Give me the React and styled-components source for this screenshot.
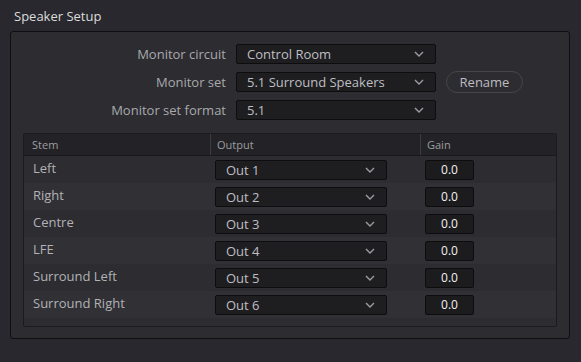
import React from "react";
import styled, { createGlobalStyle } from "styled-components";

const GlobalStyle = createGlobalStyle`
	body {
		margin: 0;
		background: #28282e;
		font-family: "Open Sans", "Noto Sans", sans-serif;
	}
`;

const stems = [
	{ name: "Left", out: "Out 1" },
	{ name: "Right", out: "Out 2" },
	{ name: "Centre", out: "Out 3" },
	{ name: "LFE", out: "Out 4" },
	{ name: "Surround Left", out: "Out 5" },
	{ name: "Surround Right", out: "Out 6" },
];

function Chevron() {
	return (
		<svg width="10" height="6" viewBox="0 0 10 6">
			<path d="M1 1 L5 5 L9 1" fill="none" stroke="#9c9ca0" strokeWidth="1.4" />
		</svg>
	);
}

function Dropdown({ value, width }) {
	return (
		<Select $width={width}>
			<span>{value}</span>
			<Chevron />
		</Select>
	);
}

export default function App() {
	return (
		<Page>
			<GlobalStyle />
			<Title>Speaker Setup</Title>
			<Panel>
				<Form>
					<Label>Monitor circuit</Label>
					<Dropdown value="Control Room" width={200} />
					<span />
					<Label>Monitor set</Label>
					<Dropdown value="5.1 Surround Speakers" width={200} />
					<Button>Rename</Button>
					<Label>Monitor set format</Label>
					<Dropdown value="5.1" width={200} />
					<span />
				</Form>

				<Table>
					<HeaderRow>
						<HeadCell>Stem</HeadCell>
						<HeadCell $divider>Output</HeadCell>
						<HeadCell $divider>Gain</HeadCell>
					</HeaderRow>
					{stems.map((s, i) => (
						<Row key={s.name} $alt={i % 2 === 1}>
							<StemName>{s.name}</StemName>
							<Cell>
								<Dropdown value={s.out} width={172} />
							</Cell>
							<Cell>
								<Gain>0.0</Gain>
							</Cell>
						</Row>
					))}
				</Table>
			</Panel>
		</Page>
	);
}

const Page = styled.div`
	padding: 6px 11px 0 10px;
	width: 560px;
`;

const Title = styled.div`
	padding-left: 4px;
	height: 20px;
	line-height: 20px;
	margin-bottom: 5px;
	font-size: 13px;
	color: #dcdcdc;
`;

const Panel = styled.div`
	border: 1px solid #0f0f11;
	border-radius: 3px;
	background: #2c2c31;
	padding: 12px 12px 11px 12px;
`;

const Form = styled.div`
	display: grid;
	grid-template-columns: 213px 200px auto;
	grid-auto-rows: 20px;
	row-gap: 8px;
	align-items: center;
	margin-bottom: 13px;
`;

const Label = styled.div`
	text-align: right;
	padding-right: 10px;
	font-size: 13px;
	color: #a9a9ac;
	line-height: 20px;
`;

const Select = styled.div`
	box-sizing: border-box;
	width: ${(p) => p.$width}px;
	height: 20px;
	display: flex;
	align-items: center;
	justify-content: space-between;
	padding: 0 11px 0 10px;
	background: #1e1e21;
	border: 1px solid #0d0d0f;
	border-radius: 2px;
	font-size: 13px;
	color: #bfbfc2;
`;

const Button = styled.button`
	justify-self: start;
	align-self: center;
	margin: -1px 0 -1px 10px;
	box-sizing: border-box;
	width: 77px;
	height: 22px;
	border: 1px solid #45454a;
	border-radius: 11px;
	background: #2c2c31;
	color: #bdbdc0;
	font-family: inherit;
	font-size: 13px;
	padding: 0;
`;

const Table = styled.div`
	border: 1px solid #1b1b1e;
	border-radius: 2px;
	background: #2c2c31;
	padding-bottom: 8px;
`;

const columns = "186px 210px 1fr";

const HeaderRow = styled.div`
	display: grid;
	grid-template-columns: ${columns};
	height: 21px;
	background: #232327;
	border-bottom: 1px solid #19191b;
`;

const HeadCell = styled.div`
	padding-left: ${(p) => (p.$divider ? 6 : 8)}px;
	border-left: ${(p) => (p.$divider ? "1px solid #3c3c41" : "none")};
	font-size: 11px;
	line-height: 21px;
	color: #9d9da0;
`;

const Row = styled.div`
	display: grid;
	grid-template-columns: ${columns};
	height: 27px;
	align-items: center;
	background: ${(p) => (p.$alt ? "#303035" : "#2c2c31")};
`;

const StemName = styled.div`
	padding-left: 9px;
	font-size: 13px;
	color: #b2b2b5;
	padding-bottom: 4px;
`;

const Cell = styled.div`
	padding-left: 5px;
	display: flex;
	align-items: center;
`;

const Gain = styled.div`
	box-sizing: border-box;
	width: 49px;
	height: 20px;
	background: #1c1c1f;
	border: 1px solid #0d0d0f;
	border-radius: 2px;
	text-align: center;
	line-height: 18px;
	font-size: 12px;
	color: #f2f2f2;
`;
